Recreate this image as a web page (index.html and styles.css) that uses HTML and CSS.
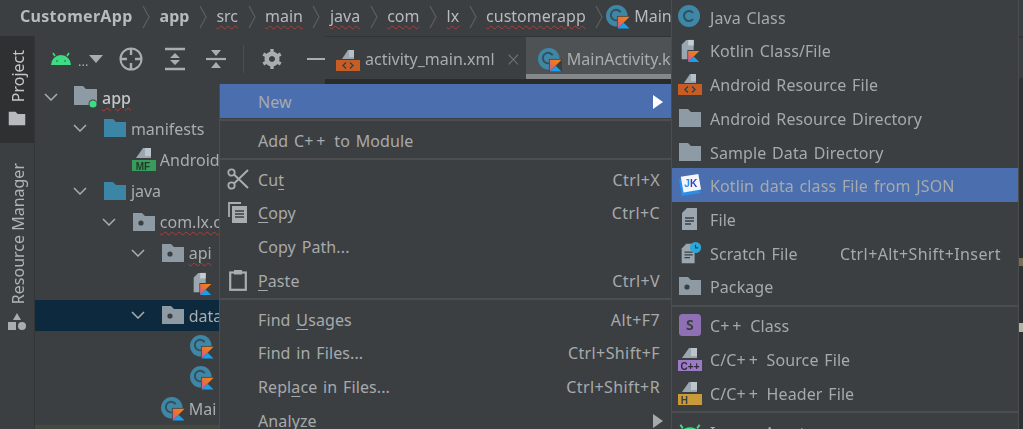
FILE: index.html
```html
<!DOCTYPE html>
<html lang="en">
<head>
<meta charset="utf-8">
<title>CustomerApp</title>
<link rel="stylesheet" href="styles.css">
</head>
<body>
<svg class="sprite" width="0" height="0" aria-hidden="true">
  <defs>
    <linearGradient id="kg" x1="0" y1="1" x2="1" y2="0">
      <stop offset="0" stop-color="#c757bc"/><stop offset=".45" stop-color="#e8703a"/><stop offset="1" stop-color="#f88909"/>
    </linearGradient>
    <symbol id="kbadge" viewBox="0 0 14 14">
      <rect width="14" height="14" fill="#3c3f41"/>
      <path d="M1 1H13L1 13Z" fill="url(#kg)"/>
      <path d="M7 7L13 13H1Z" fill="#18a0ea"/>
    </symbol>
    <symbol id="i-class" viewBox="0 0 24.5 24.5">
      <circle cx="11" cy="11" r="11" fill="#3f87a6"/>
      <path d="M15 7.5A5.4 5.4 0 1 0 13 15" fill="none" stroke="#33505e" stroke-width="2"/>
      <use href="#kbadge" x="11" y="11" width="14" height="14"/>
    </symbol>
    <symbol id="i-java" viewBox="0 0 24 24">
      <circle cx="11" cy="11" r="11" fill="#3f87a6"/>
      <path d="M15 8A5 5 0 1 0 15 14" fill="none" stroke="#2f505f" stroke-width="2"/>
    </symbol>
    <symbol id="i-kfile" viewBox="0 0 24 26">
      <path d="M3 6L8 1H16V12H10V22H3Z" fill="#9aa7b0"/>
      <path d="M10 1H16V7H10Z" fill="#c4cdd2"/>
      <use href="#kbadge" x="9" y="12" width="14" height="14"/>
    </symbol>
    <symbol id="i-tag" viewBox="0 0 24 24">
      <path d="M6 11L12 2H18V11Z" fill="#9aa7b0"/>
      <path d="M13 2H18V9H13Z" fill="#b5bfc5"/>
      <rect y="12" width="24" height="11" fill="#c75d25"/>
      <path d="M10 14.5L7 17.5L10 20.5M14 14.5L17 17.5L14 20.5" fill="none" stroke="#3c3f41" stroke-width="1.4"/>
    </symbol>
    <symbol id="i-folder" viewBox="0 0 24 20">
      <path d="M1 1H10L13 4H23V19H1Z" fill="currentColor"/>
    </symbol>
    <symbol id="i-pkg" viewBox="0 0 24 20">
      <path d="M1 1H10L13 4H23V19H1Z" fill="#8e9ba4"/>
      <circle cx="9" cy="11" r="2.6" fill="#3c3f41"/>
    </symbol>
    <symbol id="i-mod" viewBox="0 0 24 24">
      <path d="M0 1H9L12 4H23V20H0Z" fill="#8e9ba4"/>
      <circle cx="19" cy="19" r="4.5" fill="#3c3f41"/>
      <circle cx="19" cy="19" r="3.6" fill="#3ddc84"/>
    </symbol>
    <symbol id="i-mf" viewBox="0 0 24 24">
      <path d="M4 11L11 1H19V11Z" fill="#9aa7b0"/>
      <path d="M13 1H19V9H13Z" fill="#bcc5cb"/>
      <rect y="13" width="24" height="11" fill="#3a9c5c"/>
      <text x="11" y="22.5" class="badge-t" fill="#1f3a2a">MF</text>
    </symbol>
    <symbol id="i-cpp" viewBox="0 0 24 24">
      <path d="M4 11L11 1H19V11Z" fill="#9aa7b0"/>
      <path d="M13 1H19V9H13Z" fill="#bcc5cb"/>
      <rect y="13" width="24" height="11" fill="#9c7bc4"/>
      <text x="12" y="22.5" class="badge-t" fill="#2f2a3a">C++</text>
    </symbol>
    <symbol id="i-h" viewBox="0 0 24 24">
      <path d="M4 11L11 1H19V11Z" fill="#9aa7b0"/>
      <path d="M13 1H19V9H13Z" fill="#bcc5cb"/>
      <rect y="13" width="24" height="11" fill="#c89a3a"/>
      <text x="6.5" y="22.5" class="badge-t" fill="#3c3f41">H</text>
    </symbol>
    <symbol id="i-file" viewBox="0 0 24 24">
      <path d="M4 6L9 1H19V23H4Z" fill="#9aa7b0"/>
      <path d="M7 11H16M7 14H16M7 17H13" stroke="#3c3f41" stroke-width="1.3"/>
    </symbol>
    <symbol id="i-scratch" viewBox="0 0 26 24">
      <path d="M4 7L9 2H18V23H4Z" fill="#9aa7b0"/>
      <path d="M7 11H16M7 14H16M7 17H13" stroke="#3c3f41" stroke-width="1.3"/>
      <circle cx="19" cy="6" r="6" fill="#29a8e0"/>
      <path d="M19 3V6.5H22" fill="none" stroke="#3c3f41" stroke-width="1.2"/>
    </symbol>
    <symbol id="i-s" viewBox="0 0 24 24">
      <rect x="1" y="1" width="22" height="22" rx="3.5" fill="#9070b5"/>
      <text x="12" y="17" class="badge-s" fill="#3c3f41">S</text>
    </symbol>
    <symbol id="i-jk" viewBox="0 0 26 24">
      <path d="M1 6L21 3L24 21L4 24Z" fill="#2a8fe8"/>
      <path d="M3 3L22 0L25 17L6 20Z" fill="#f4f6fb"/>
      <text x="10" y="14" class="badge-jk" fill="#2a8fe8">J</text>
      <text x="17" y="14" class="badge-jk" fill="#3a3fc0">K</text>
    </symbol>
    <symbol id="i-android" viewBox="0 0 20 14">
      <path d="M0 13A10 10 0 0 1 20 13Z" fill="#3ddc84"/>
      <path d="M4 4L2 1M16 4L18 1" stroke="#3ddc84" stroke-width="1.6"/>
      <circle cx="6" cy="9" r="1" fill="#2f8f5a"/><circle cx="14" cy="9" r="1" fill="#2f8f5a"/>
    </symbol>
    <symbol id="i-target" viewBox="0 0 24 24">
      <circle cx="12" cy="12" r="10.5" fill="none" stroke="#a9adb0" stroke-width="2"/>
      <path d="M12 1V8M12 16V23M1 12H8M16 12H23" stroke="#a9adb0" stroke-width="2.4"/>
    </symbol>
    <symbol id="i-expand" viewBox="0 0 20 24">
      <path d="M0 2H20M0 22H20" stroke="#a9adb0" stroke-width="2.4"/>
      <path d="M10 6L15 11H5ZM10 18L5 13H15Z" fill="#a9adb0"/>
    </symbol>
    <symbol id="i-collapse" viewBox="0 0 20 20">
      <path d="M0 10H20" stroke="#a9adb0" stroke-width="2.2"/>
      <path d="M10 7L5 1H15ZM10 13L15 19H5Z" fill="#a9adb0"/>
    </symbol>
    <symbol id="i-gear" viewBox="0 0 20 20">
      <path d="M10 2.5A7.5 7.5 0 1 0 10.01 2.5ZM10 7A3 3 0 1 1 9.99 7Z" fill="#a9adb0" fill-rule="evenodd"/>
      <path d="M10 0V5M10 15V20M1.3 5L5.6 7.5M14.4 12.5L18.7 15M1.3 15L5.6 12.5M14.4 7.5L18.7 5" stroke="#a9adb0" stroke-width="3.4"/>
    </symbol>
    <symbol id="i-cut" viewBox="0 0 22 22">
      <circle cx="4.5" cy="4.5" r="3.2" fill="none" stroke="#a9adb0" stroke-width="1.8"/>
      <circle cx="4.5" cy="17.5" r="3.2" fill="none" stroke="#a9adb0" stroke-width="1.8"/>
      <path d="M7 6.5L21 20M7 15.5L21 2" stroke="#a9adb0" stroke-width="2"/>
    </symbol>
    <symbol id="i-copy" viewBox="0 0 20 22">
      <path d="M1 15V1H13" fill="none" stroke="#a9adb0" stroke-width="1.8"/>
      <rect x="4" y="4" width="15" height="17" fill="#a9adb0"/>
      <path d="M7 9H16M7 12H16M7 15H16" stroke="#3c3f41" stroke-width="1.4"/>
    </symbol>
    <symbol id="i-paste" viewBox="0 0 18 22">
      <rect x="1.2" y="3.5" width="15.6" height="17.3" fill="none" stroke="#a9adb0" stroke-width="2.2"/>
      <rect x="5" y="1" width="8" height="4.5" fill="#a9adb0"/>
    </symbol>
    <symbol id="i-shapes" viewBox="0 0 18 18">
      <path d="M9 0L13 7H5Z" fill="#a9adb0"/>
      <rect x="0" y="9" width="8" height="8" fill="#a9adb0"/>
      <circle cx="14" cy="13" r="4" fill="#a9adb0"/>
    </symbol>
    <symbol id="i-chev" viewBox="0 0 14 8">
      <path d="M1 1L7 7L13 1" fill="none" stroke="#a9adb0" stroke-width="1.5"/>
    </symbol>
    <symbol id="i-crumb" viewBox="0 0 8 24">
      <path d="M1 1L7 12L1 23" fill="none" stroke="#5c5f61" stroke-width="1.2"/>
    </symbol>
  </defs>
</svg>

<div class="app">
  <header class="crumbs">
    <b class="crumb first">CustomerApp</b><svg class="sep-c"><use href="#i-crumb"/></svg>
    <b class="crumb">app</b><svg class="sep-c"><use href="#i-crumb"/></svg>
    <span class="crumb sq">src</span><svg class="sep-c"><use href="#i-crumb"/></svg>
    <span class="crumb sq">main</span><svg class="sep-c"><use href="#i-crumb"/></svg>
    <span class="crumb sq">java</span><svg class="sep-c"><use href="#i-crumb"/></svg>
    <span class="crumb sq">com</span><svg class="sep-c"><use href="#i-crumb"/></svg>
    <span class="crumb sq">lx</span><svg class="sep-c"><use href="#i-crumb"/></svg>
    <span class="crumb sq">customerapp</span><svg class="sep-c"><use href="#i-crumb"/></svg>
    <svg class="ic26 crumb-ic"><use href="#i-class"/></svg><span class="crumb">Main</span>
  </header>

  <div class="workspace">
    <nav class="rail">
      <div class="rail-tab active">
        <span class="vtext">Project</span>
        <svg class="rail-folder"><use href="#i-folder"/></svg>
      </div>
      <div class="rail-tab">
        <span class="vtext">Resource Manager</span>
        <svg class="rail-shapes"><use href="#i-shapes"/></svg>
      </div>
    </nav>

    <section class="project">
      <div class="toolbar">
        <svg class="t-android"><use href="#i-android"/></svg>
        <span class="t-dots">...</span>
        <span class="t-tri"></span>
        <svg class="t-target"><use href="#i-target"/></svg>
        <svg class="t-expand"><use href="#i-expand"/></svg>
        <svg class="t-collapse"><use href="#i-collapse"/></svg>
        <span class="t-div"></span>
        <svg class="t-gear"><use href="#i-gear"/></svg>
        <span class="t-min"></span>
      </div>
      <ul class="tree">
        <li class="row lv0"><svg class="chev"><use href="#i-chev"/></svg><svg class="ic24"><use href="#i-mod"/></svg><span class="sq strong">app</span></li>
        <li class="row lv1"><svg class="chev"><use href="#i-chev"/></svg><svg class="ic24 blue"><use href="#i-folder"/></svg><span>manifests</span></li>
        <li class="row lv2"><span class="chev"></span><svg class="ic24"><use href="#i-mf"/></svg><span>Android</span></li>
        <li class="row lv1"><svg class="chev"><use href="#i-chev"/></svg><svg class="ic24 blue"><use href="#i-folder"/></svg><span>java</span></li>
        <li class="row lv2"><svg class="chev"><use href="#i-chev"/></svg><svg class="ic24"><use href="#i-pkg"/></svg><span class="sq">com.lx.c</span></li>
        <li class="row lv3"><svg class="chev"><use href="#i-chev"/></svg><svg class="ic24"><use href="#i-pkg"/></svg><span class="sq">api</span></li>
        <li class="row lv4"><span class="chev"></span><svg class="ic24"><use href="#i-kfile"/></svg></li>
        <li class="row lv3 selected"><svg class="chev"><use href="#i-chev"/></svg><svg class="ic24"><use href="#i-pkg"/></svg><span>data</span></li>
        <li class="row lv4"><span class="chev"></span><svg class="ic24"><use href="#i-class"/></svg></li>
        <li class="row lv4"><span class="chev"></span><svg class="ic24"><use href="#i-class"/></svg></li>
        <li class="row lv3"><span class="chev"></span><svg class="ic24"><use href="#i-class"/></svg><span>Mai</span></li>
        <li class="row lv3 caret-row"></li>
      </ul>
    </section>

    <main class="editor">
      <div class="tabs">
        <div class="tab"><svg class="ic24"><use href="#i-tag"/></svg><span>activity_main.xml</span><span class="tab-x">×</span></div>
        <div class="tab current"><svg class="ic26"><use href="#i-class"/></svg><span>MainActivity.k</span></div>
      </div>
      <div class="code-strip"></div>
    </main>

    <aside class="gutter">
      <span class="gutter-top"></span>
      <span class="mark mark-a"></span>
      <span class="mark mark-b"></span>
    </aside>
  </div>

  <ul class="menu main-menu">
    <li class="mi hot"><span class="mi-ic"></span><span>New</span><span class="arrow"></span></li>
    <li class="msep"></li>
    <li class="mi"><span class="mi-ic"></span><span>Add C<span class="pp">++</span> to Module</span></li>
    <li class="msep"></li>
    <li class="mi"><span class="mi-ic"><svg class="ic22"><use href="#i-cut"/></svg></span><span>Cu<u>t</u></span><span class="key">Ctrl+X</span></li>
    <li class="mi"><span class="mi-ic"><svg class="ic22"><use href="#i-copy"/></svg></span><span><u>C</u>opy</span><span class="key">Ctrl+C</span></li>
    <li class="mi"><span class="mi-ic"></span><span>Copy Path...</span></li>
    <li class="mi"><span class="mi-ic"><svg class="ic22"><use href="#i-paste"/></svg></span><span><u>P</u>aste</span><span class="key">Ctrl+V</span></li>
    <li class="msep"></li>
    <li class="mi"><span class="mi-ic"></span><span>Find <u>U</u>sages</span><span class="key">Alt+F7</span></li>
    <li class="mi"><span class="mi-ic"></span><span>Find in Files...</span><span class="key">Ctrl+Shift+F</span></li>
    <li class="mi"><span class="mi-ic"></span><span>Repl<u>a</u>ce in Files...</span><span class="key">Ctrl+Shift+R</span></li>
    <li class="mi"><span class="mi-ic"></span><span>Anal<u>y</u>ze</span><span class="arrow dim"></span></li>
  </ul>

  <ul class="menu sub-menu">
    <li class="mi"><span class="mi-ic"><svg class="ic24"><use href="#i-java"/></svg></span><span>Java Class</span></li>
    <li class="mi"><span class="mi-ic"><svg class="ic24"><use href="#i-kfile"/></svg></span><span>Kotlin Class/File</span></li>
    <li class="mi"><span class="mi-ic"><svg class="ic24"><use href="#i-tag"/></svg></span><span>Android Resource File</span></li>
    <li class="mi"><span class="mi-ic"><svg class="ic24 grey"><use href="#i-folder"/></svg></span><span>Android Resource Directory</span></li>
    <li class="mi"><span class="mi-ic"><svg class="ic24 grey"><use href="#i-folder"/></svg></span><span>Sample Data Directory</span></li>
    <li class="mi hot"><span class="mi-ic"><svg class="ic24"><use href="#i-jk"/></svg></span><span>Kotlin data class File from JSON</span></li>
    <li class="mi"><span class="mi-ic"><svg class="ic24"><use href="#i-file"/></svg></span><span>File</span></li>
    <li class="mi"><span class="mi-ic"><svg class="ic24"><use href="#i-scratch"/></svg></span><span>Scratch File</span><span class="key">Ctrl+Alt+Shift+Insert</span></li>
    <li class="mi"><span class="mi-ic"><svg class="ic24"><use href="#i-pkg"/></svg></span><span>Package</span></li>
    <li class="msep"></li>
    <li class="mi"><span class="mi-ic"><svg class="ic24"><use href="#i-s"/></svg></span><span>C<span class="pp">++</span> Class</span></li>
    <li class="mi"><span class="mi-ic"><svg class="ic24"><use href="#i-cpp"/></svg></span><span>C/C<span class="pp">++</span> Source File</span></li>
    <li class="mi"><span class="mi-ic"><svg class="ic24"><use href="#i-h"/></svg></span><span>C/C<span class="pp">++</span> Header File</span></li>
    <li class="msep"></li>
    <li class="mi"><span class="mi-ic"><svg class="ic24"><use href="#i-android"/></svg></span><span>Image Asset</span></li>
  </ul>
</div>
</body>
</html>
```

FILE: styles.css
```css
* { box-sizing: border-box; }
html, body { margin: 0; padding: 0; background: #3c3f41; }
body { width: 1023px; height: 429px; overflow: hidden; }
ul { list-style: none; margin: 0; padding: 0; }
svg { display: block; flex: none; }
.sprite { position: absolute; }
.badge-t { font: 700 10px "Liberation Sans", sans-serif; text-anchor: middle; }
.badge-s { font: 700 14px "Noto Sans", sans-serif; text-anchor: middle; }
.badge-jk { font: 700 11px "Liberation Sans", sans-serif; text-anchor: middle; }

.app {
  position: relative;
  width: 1023px;
  height: 429px;
  overflow: hidden;
  font: 16px/1.2 "Noto Sans", "Open Sans", sans-serif;
  color: #a9adb0;
  display: flex;
  flex-direction: column;
  filter: blur(.45px);
}

/* breadcrumb */
.crumbs {
  width: 671px;
  height: 36px;
  flex: none;
  display: flex;
  align-items: center;
  padding: 0 0 2px 20px;
  gap: 9.5px;
  font-size: 16px;
  color: #b8bbbd;
  white-space: nowrap;
  overflow: hidden;
}
.crumb { flex: none; }
.first { letter-spacing: .3px; }
.sep-c { width: 8px; height: 24px; }
.crumb-ic { margin: 0 -5px 0 -7px; }
.sq { text-decoration: underline wavy #a8403c 1px; text-underline-offset: 3px; }

.workspace { flex: 1; display: flex; min-height: 0; }

/* left rail */
.rail { width: 35px; flex: none; border-right: 1px solid #323436; display: flex; flex-direction: column; }
.rail-tab { display: flex; flex-direction: column; align-items: center; padding: 14px 0 14px; gap: 9px; color: #b0b3b5; }
.rail-tab.active { background: #2e3032; height: 107px; margin-bottom: 6px; color: #c4c6c8; }
.vtext { writing-mode: vertical-rl; transform: rotate(180deg); line-height: 18px; margin-left: 2px; }
.rail-folder { width: 18px; height: 15px; color: #b8bbbd; }
.rail-shapes { width: 18px; height: 18px; }

/* project panel */
.project { width: 290px; flex: none; display: flex; flex-direction: column; min-height: 0; }
.toolbar { height: 45.5px; flex: none; display: flex; align-items: center; padding: 0 0 0 16px; }
.t-android { width: 20px; height: 14px; }
.t-dots { margin-left: 7px; width: 11px; line-height: 12px; font-size: 13px; margin-top: 4px; }
.t-tri { width: 0; height: 0; border: 7px solid transparent; border-top: 8px solid #a9adb0; border-bottom: 0; }
.t-target { width: 24px; height: 24px; margin-left: 16px; }
.t-expand { width: 20px; height: 24px; margin-left: 22px; }
.t-collapse { width: 20px; height: 20px; margin-left: 21px; }
.t-div { width: 1px; height: 28px; background: #4a4d4f; margin-left: 17px; }
.t-gear { width: 20px; height: 20px; margin-left: 18px; }
.t-min { width: 19px; height: 2.5px; background: #a9adb0; margin-left: 25px; }

.tree { flex: 1; min-height: 0; width: 184px; overflow: hidden; }
.row { height: 31.2px; display: flex; align-items: center; white-space: nowrap; padding-left: 9px; }
.row > span:last-child { margin-left: 4px; padding-top: 2px; flex: none; }
.chev { width: 14px; height: 8px; margin-right: 16px; flex: none; }
.lv1 { padding-left: 37.9px; }
.lv2 { padding-left: 66.8px; }
.lv3 { padding-left: 95.7px; }
.lv4 { padding-left: 124.6px; }
.selected { background: #0d293e; }
.caret-row { background: #45493f; }
.strong { color: #c4c6c8; font-weight: 500; }
.ic24 { width: 24px; height: 24px; }
.ic26 { width: 24px; height: 24px; }
.ic22 { width: 22px; height: 22px; }
.blue { color: #3b86a6; height: 20px; }
.grey { color: #8e9ba4; height: 20px; }

/* editor */
.editor { flex: 1; min-width: 0; display: flex; flex-direction: column; background: #2b2b2b; }
.tabs { height: 43px; flex: none; display: flex; background: #3c3f41; border-top: 1px solid #323436; }
.tab { display: flex; align-items: center; gap: 5px; padding: 8px 6px 0 11px; white-space: nowrap; font-size: 16px; border-bottom: 5px solid transparent; }
.tab-x { font-size: 23px; line-height: 1; color: #6f7274; margin-left: 7px; font-weight: 300; }
.tab.current { background: #4e5254; border-bottom-color: #85888a; padding-left: 12px; flex: 1; overflow: hidden; }

/* right strip */
.gutter { width: 5px; flex: none; background: #2f3133; border-top: 2px solid #323436; display: flex; flex-direction: column; align-items: stretch; }
.gutter-top { height: 40px; background: #3c3f41; }
.mark { display: block; }
.mark-a { height: 8px; margin-top: 180px; background: #7a6c52; }
.mark-b { height: 9px; margin-top: 57px; background: #b8b5a8; }

/* menus */
.menu { position: absolute; background: #3c3f41; border-left: 1px solid #4a4c4e; color: #a7aaac; font-size: 16px; letter-spacing: .1px; word-spacing: 1.5px; }
.main-menu { left: 219px; top: 84px; width: 452px; }
.sub-menu { left: 671px; top: 0; width: 348px; border-right: 1px solid #4a4c4e; }
.sub-menu .mi { padding-right: 17px; }
.mi { height: 33.7px; display: flex; align-items: center; white-space: nowrap; padding: 3px 11px 0 6px; }
.mi-ic { width: 24px; height: 24px; margin-right: 8px; flex: none; display: flex; align-items: center; justify-content: center; margin-top: -3px; }
.mi.hot { background: #4b6eaf; }
.key { margin-left: auto; letter-spacing: .4px; }
.pp { letter-spacing: 3px; }
.msep { height: 5.3px; display: flex; align-items: center; }
.msep::before { content: ""; flex: 1; height: 2px; background: #4b4d4f; }
.arrow { margin-left: auto; margin-right: -3px; width: 0; height: 0; border: 7px solid transparent; border-left: 10px solid #fff; border-right: 0; }
.arrow.dim { border-left-color: #a7aaac; }
u { text-underline-offset: 3px; }
```
